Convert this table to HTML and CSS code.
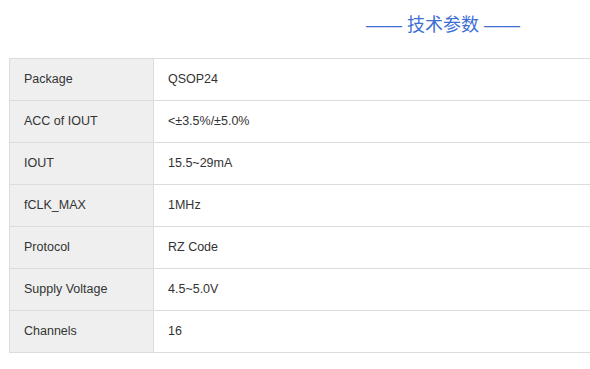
FILE: index.html
```html
<!DOCTYPE html>
<html>
<head>
<meta charset="utf-8">
<link rel="stylesheet" href="styles.css">
</head>
<body>
<div class="page">
  <h2 class="title">—— 技术参数 ——</h2>
  <table class="spec">
    <tr><td class="k">Package</td><td class="v">QSOP24</td></tr>
    <tr><td class="k">ACC of IOUT</td><td class="v">&lt;±3.5%/±5.0%</td></tr>
    <tr><td class="k">IOUT</td><td class="v">15.5~29mA</td></tr>
    <tr><td class="k">fCLK_MAX</td><td class="v">1MHz</td></tr>
    <tr><td class="k">Protocol</td><td class="v">RZ Code</td></tr>
    <tr><td class="k">Supply Voltage</td><td class="v">4.5~5.0V</td></tr>
    <tr><td class="k">Channels</td><td class="v">16</td></tr>
  </table>
</div>
</body>
</html>
```
FILE: styles.css
```css
html, body { margin: 0; padding: 0; background: #fff; overflow: hidden; }
.page { padding: 0 0 0 9px; width: 581px; overflow: hidden; font-family: "Liberation Sans", Arial, sans-serif; }
.title {
  margin: 0;
  height: 58px;
  line-height: 50px;
  font-weight: normal;
  font-size: 18px;
  color: #3d6fd3;
  padding-left: 357px;
  font-family: "Liberation Sans", "Noto Sans CJK SC", sans-serif;
}
.spec { border-collapse: collapse; width: 582px; }
.spec td {
  border: 1px solid #dcdcdc;
  height: 42px;
  padding: 0 14px 2px;
  font-size: 12.5px;
  color: #333;
  box-sizing: border-box;
}
.spec .k { background: #efefef; width: 144px; }
.spec .v { background: #fff; }
```
